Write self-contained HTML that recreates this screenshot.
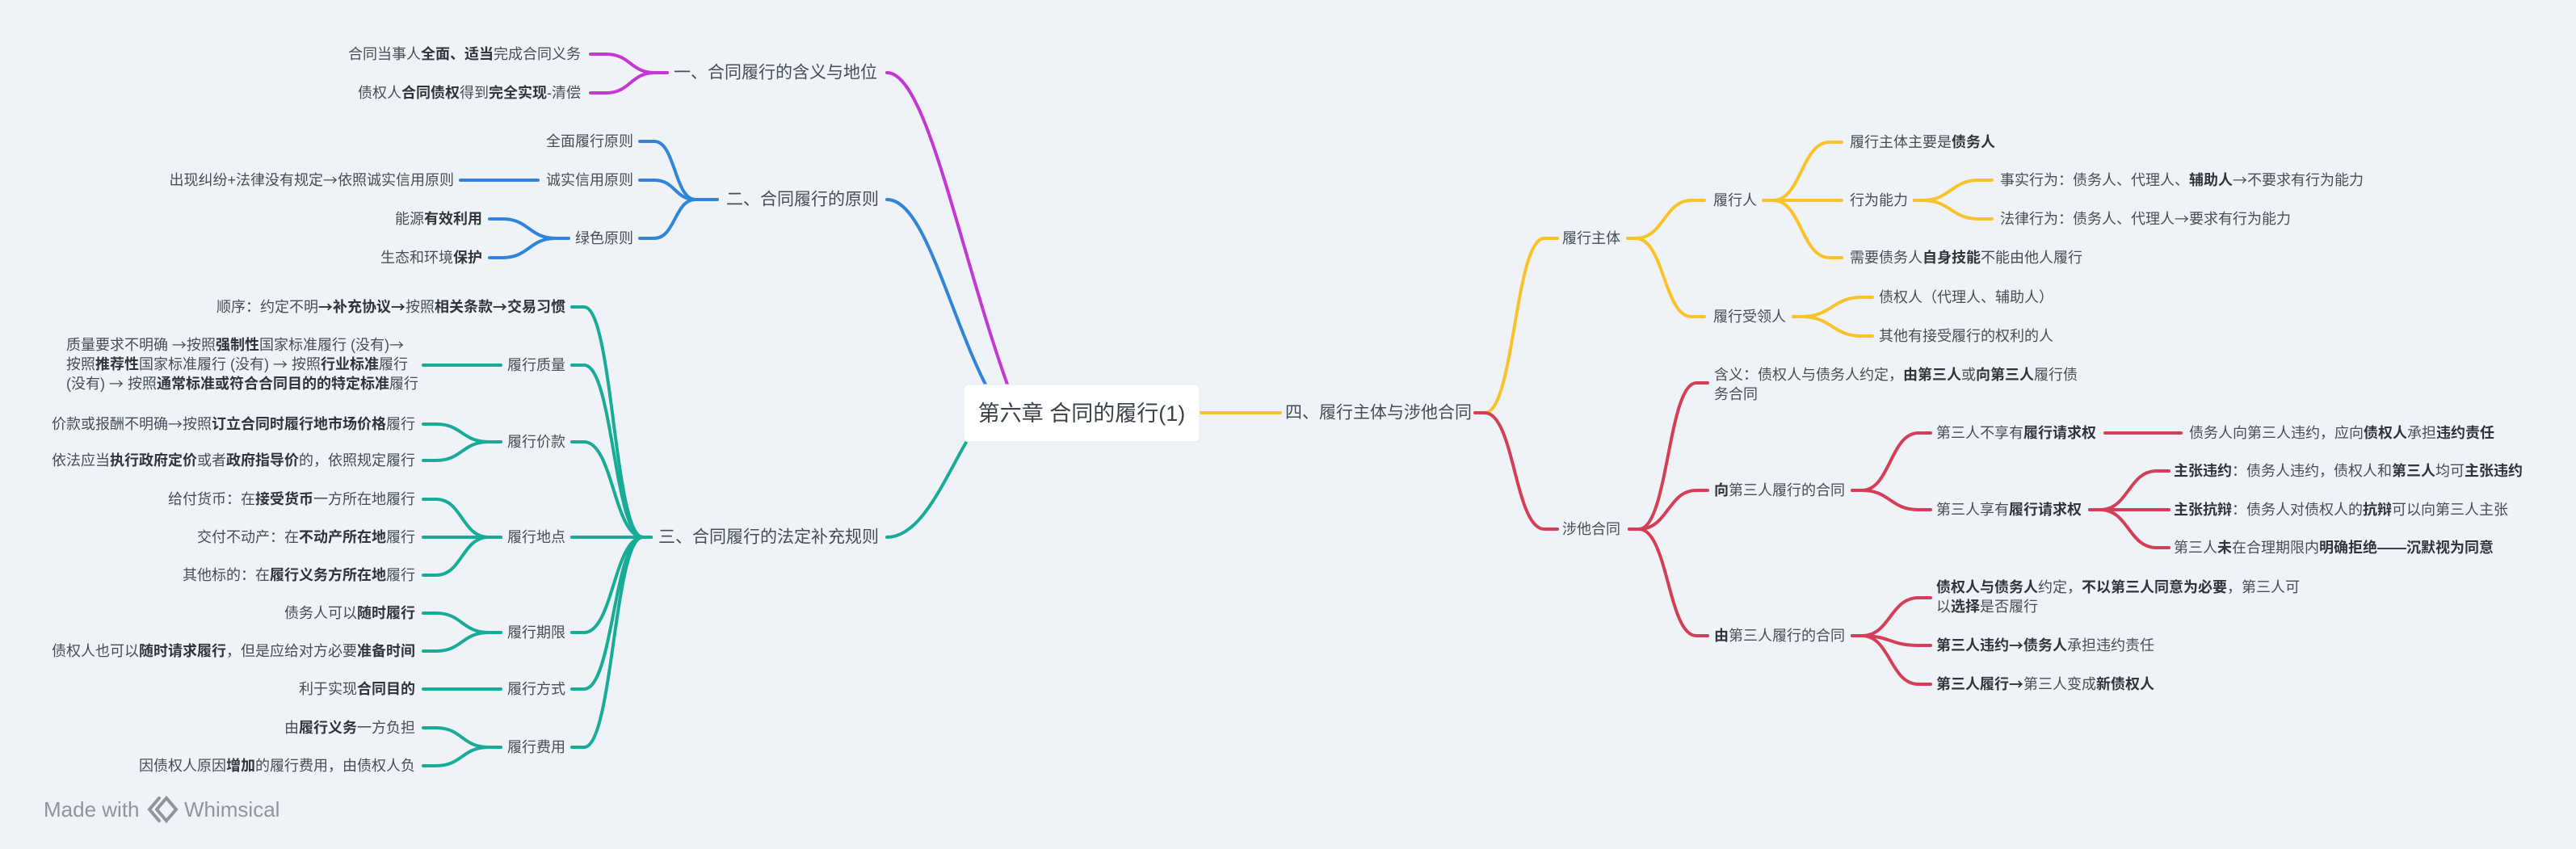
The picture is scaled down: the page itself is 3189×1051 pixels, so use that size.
<!DOCTYPE html>
<html><head><meta charset="utf-8"><style>
html,body{margin:0;padding:0;background:#eff3f7;}
svg{display:block;font-family:"Liberation Sans","Noto Sans CJK SC",sans-serif;}
text{fill:#454d58;font-size:18px;dominant-baseline:central;}
.b{font-weight:bold;fill:#2f353d;}
.a{font-family:"Noto Sans CJK SC",sans-serif;}
.l1{font-size:21px;}
.e{text-anchor:end;}
path{fill:none;stroke-width:4;stroke-linecap:round;}
.p{stroke:#c537d4}.bl{stroke:#2f86d9}.t{stroke:#18ac98}.y{stroke:#f8c22a}.r{stroke:#d43f57}
</style></head><body>
<svg width="3189" height="1051" viewBox="0 0 3189 1051">
<path class="p" stroke-width="3" d="M1098 90 C1150 90 1190 330 1260 511"/>
<path class="bl" stroke-width="3" d="M1098 247 C1150 247 1180 420 1240 511"/>
<path class="t" stroke-width="3" d="M1098 665 C1150 665 1180 560 1220 511"/>
<path class="y" d="M1485 511 H1585"/>
<rect x="1193" y="476" width="292" height="71" rx="6" fill="#fff" stroke="#e6e9ee"/>
<text x="1339" y="512" style="font-size:27px;text-anchor:middle;fill:#3a414b">第六章 合同的履行(1)</text>

<path class="p" d="M826 90 H811 C780 90 781 67 750 67 H731"/>
<path class="p" d="M826 90 H811 C780 90 781 115 750 115 H731"/>
<text class="l1" x="834" y="90">一、合同履行的含义与地位</text>
<text class="e" x="719" y="67">合同当事人<tspan class="b">全面、适当</tspan>完成合同义务</text>
<text class="e" x="719" y="115">债权人<tspan class="b">合同债权</tspan>得到<tspan class="b">完全实现</tspan>-清偿</text>

<path class="bl" d="M888 247 H861 C835 247 836 175 810 175 H792"/>
<path class="bl" d="M888 247 H861 C835 247 836 223 810 223 H792"/>
<path class="bl" d="M888 247 H861 C835 247 836 295 810 295 H792"/>
<path class="bl" d="M666 223 H570"/>
<path class="bl" d="M704 295 H688 C655 295 655 271 622 271 H606"/>
<path class="bl" d="M704 295 H688 C655 295 655 319 622 319 H606"/>
<text class="l1" x="899" y="247">二、合同履行的原则</text>
<text class="e" x="784" y="175">全面履行原则</text>
<text class="e" x="784" y="223">诚实信用原则</text>
<text class="e" x="784" y="295">绿色原则</text>
<text class="e" x="562" y="223">出现纠纷+法律没有规定<tspan class="a">→</tspan>依照诚实信用原则</text>
<text class="e" x="597" y="271">能源<tspan class="b">有效利用</tspan></text>
<text class="e" x="597" y="319">生态和环境<tspan class="b">保护</tspan></text>

<path class="t" d="M806 665 H796 C760 665 759 380 723 380 H708"/>
<path class="t" d="M806 665 H796 C760 665 759 452 723 452 H708"/>
<path class="t" d="M806 665 H796 C760 665 759 547 723 547 H708"/>
<path class="t" d="M806 665 H708"/>
<path class="t" d="M806 665 H796 C760 665 759 783 723 783 H708"/>
<path class="t" d="M806 665 H796 C760 665 759 853 723 853 H708"/>
<path class="t" d="M806 665 H796 C760 665 759 925 723 925 H708"/>
<path class="t" d="M620 452 H524"/>
<path class="t" d="M620 547 H605 C572 547 572 525 540 525 H524"/>
<path class="t" d="M620 547 H605 C572 547 572 570 540 570 H524"/>
<path class="t" d="M620 665 H605 C572 665 572 618 540 618 H524"/>
<path class="t" d="M620 665 H524"/>
<path class="t" d="M620 665 H605 C572 665 572 712 540 712 H524"/>
<path class="t" d="M620 783 H605 C572 783 572 759 540 759 H524"/>
<path class="t" d="M620 783 H605 C572 783 572 806 540 806 H524"/>
<path class="t" d="M620 853 H524"/>
<path class="t" d="M620 925 H605 C572 925 572 901 540 901 H524"/>
<path class="t" d="M620 925 H605 C572 925 572 948 540 948 H524"/>
<text class="l1" x="815" y="665">三、合同履行的法定补充规则</text>
<text class="e" x="700" y="380">顺序：约定不明<tspan class="b a">→</tspan><tspan class="b">补充协议</tspan><tspan class="b a">→</tspan>按照<tspan class="b">相关条款</tspan><tspan class="b a">→</tspan><tspan class="b">交易习惯</tspan></text>
<text class="e" x="700" y="452">履行质量</text>
<text class="e" x="700" y="547">履行价款</text>
<text class="e" x="700" y="665">履行地点</text>
<text class="e" x="700" y="783">履行期限</text>
<text class="e" x="700" y="853">履行方式</text>
<text class="e" x="700" y="925">履行费用</text>
<text x="82" y="427">质量要求不明确 <tspan class="a">→</tspan>按照<tspan class="b">强制性</tspan>国家标准履行 (没有)<tspan class="a">→</tspan></text>
<text x="82" y="451">按照<tspan class="b">推荐性</tspan>国家标准履行 (没有) <tspan class="a">→</tspan> 按照<tspan class="b">行业标准</tspan>履行</text>
<text x="82" y="475">(没有) <tspan class="a">→</tspan> 按照<tspan class="b">通常标准或符合合同目的的特定标准</tspan>履行</text>
<text class="e" x="514" y="525">价款或报酬不明确<tspan class="a">→</tspan>按照<tspan class="b">订立合同时履行地市场价格</tspan>履行</text>
<text class="e" x="514" y="570">依法应当<tspan class="b">执行政府定价</tspan>或者<tspan class="b">政府指导价</tspan>的，依照规定履行</text>
<text class="e" x="514" y="618">给付货币：在<tspan class="b">接受货币</tspan>一方所在地履行</text>
<text class="e" x="514" y="665">交付不动产：在<tspan class="b">不动产所在地</tspan>履行</text>
<text class="e" x="514" y="712">其他标的：在<tspan class="b">履行义务方所在地</tspan>履行</text>
<text class="e" x="514" y="759">债务人可以<tspan class="b">随时履行</tspan></text>
<text class="e" x="514" y="806">债权人也可以<tspan class="b">随时请求履行</tspan>，但是应给对方必要<tspan class="b">准备时间</tspan></text>
<text class="e" x="514" y="853">利于实现<tspan class="b">合同目的</tspan></text>
<text class="e" x="514" y="901">由<tspan class="b">履行义务</tspan>一方负担</text>
<text class="e" x="514" y="948">因债权人原因<tspan class="b">增加</tspan>的履行费用，由债权人负</text>

<text class="l1" x="1591" y="511">四、履行主体与涉他合同</text>
<path class="y" d="M1826 511 H1838 C1875 511 1875 295 1912 295 H1928"/>
<path class="r" d="M1826 511 H1838 C1875 511 1875 655 1912 655 H1928"/>
<text x="1934" y="295">履行主体</text>
<text x="1934" y="655">涉他合同</text>

<path class="y" d="M2015 295 H2025 C2060 295 2060 248 2094 248 H2110"/>
<path class="y" d="M2015 295 H2025 C2060 295 2060 392 2094 392 H2110"/>
<text x="2121" y="248">履行人</text>
<text x="2121" y="392">履行受领人</text>
<path class="y" d="M2183 248 H2195 C2230 248 2230 176 2265 176 H2280"/>
<path class="y" d="M2183 248 H2280"/>
<path class="y" d="M2183 248 H2195 C2230 248 2230 319 2265 319 H2280"/>
<text x="2290" y="176">履行主体主要是<tspan class="b">债务人</tspan></text>
<text x="2290" y="248">行为能力</text>
<text x="2290" y="319">需要债务人<tspan class="b">自身技能</tspan>不能由他人履行</text>
<path class="y" d="M2370 248 H2380 C2415 248 2415 223 2450 223 H2466"/>
<path class="y" d="M2370 248 H2380 C2415 248 2415 271 2450 271 H2466"/>
<text x="2476" y="223">事实行为：债务人、代理人、<tspan class="b">辅助人</tspan><tspan class="a">→</tspan>不要求有行为能力</text>
<text x="2476" y="271">法律行为：债务人、代理人<tspan class="a">→</tspan>要求有行为能力</text>
<path class="y" d="M2220 392 H2230 C2268 392 2268 368 2305 368 H2318"/>
<path class="y" d="M2220 392 H2230 C2268 392 2268 416 2305 416 H2318"/>
<text x="2326" y="368">债权人（代理人、辅助人）</text>
<text x="2326" y="416">其他有接受履行的权利的人</text>

<path class="r" d="M2017 655 H2029 C2065 655 2065 474 2100 474 H2114"/>
<path class="r" d="M2017 655 H2029 C2065 655 2065 607 2100 607 H2114"/>
<path class="r" d="M2017 655 H2029 C2065 655 2065 787 2100 787 H2114"/>
<text x="2122" y="464">含义：债权人与债务人约定，<tspan class="b">由第三人</tspan>或<tspan class="b">向第三人</tspan>履行债</text>
<text x="2122" y="488">务合同</text>
<text x="2122" y="607"><tspan class="b">向</tspan>第三人履行的合同</text>
<text x="2122" y="787"><tspan class="b">由</tspan>第三人履行的合同</text>
<path class="r" d="M2293 607 H2305 C2340 607 2340 536 2375 536 H2390"/>
<path class="r" d="M2293 607 H2305 C2340 607 2340 631 2375 631 H2390"/>
<path class="r" d="M2606 536 H2700"/>
<text x="2397" y="536">第三人不享有<tspan class="b">履行请求权</tspan></text>
<text x="2397" y="631">第三人享有<tspan class="b">履行请求权</tspan></text>
<text x="2710" y="536">债务人向第三人违约，应向<tspan class="b">债权人</tspan>承担<tspan class="b">违约责任</tspan></text>
<path class="r" d="M2587 631 H2600 C2635 631 2635 583 2670 583 H2685"/>
<path class="r" d="M2587 631 H2685"/>
<path class="r" d="M2587 631 H2600 C2635 631 2635 678 2670 678 H2685"/>
<text x="2691" y="583"><tspan class="b">主张违约</tspan>：债务人违约，债权人和<tspan class="b">第三人</tspan>均可<tspan class="b">主张违约</tspan></text>
<text x="2691" y="631"><tspan class="b">主张抗辩</tspan>：债务人对债权人的<tspan class="b">抗辩</tspan>可以向第三人主张</text>
<text x="2691" y="678">第三人<tspan class="b">未</tspan>在合理期限内<tspan class="b">明确拒绝——沉默视为同意</tspan></text>
<path class="r" d="M2293 787 H2305 C2340 787 2340 740 2375 740 H2390"/>
<path class="r" d="M2293 787 H2305 C2340 787 2340 799 2375 799 H2390"/>
<path class="r" d="M2293 787 H2305 C2340 787 2340 847 2375 847 H2390"/>
<text x="2397" y="727"><tspan class="b">债权人与债务人</tspan>约定，<tspan class="b">不以第三人同意为必要</tspan>，第三人可</text>
<text x="2397" y="751">以<tspan class="b">选择</tspan>是否履行</text>
<text x="2397" y="799"><tspan class="b">第三人违约</tspan><tspan class="b a">→</tspan><tspan class="b">债务人</tspan>承担违约责任</text>
<text x="2397" y="847"><tspan class="b">第三人履行</tspan><tspan class="b a">→</tspan>第三人变成<tspan class="b">新债权人</tspan></text>

<text x="54" y="1002" style="font-size:26px;fill:#8d969f">Made with</text>
<g transform="translate(186,1002)" fill="none" stroke="#8d969f" stroke-width="3">
<path d="M8 0 L20 -14 L32 0 L20 14 Z" fill="#8d969f"/>
<path d="M11 -14 L-1 0 L11 14"/>
</g>
<text x="228" y="1002" style="font-size:26px;fill:#8d969f">Whimsical</text>
</svg>
</body></html>
